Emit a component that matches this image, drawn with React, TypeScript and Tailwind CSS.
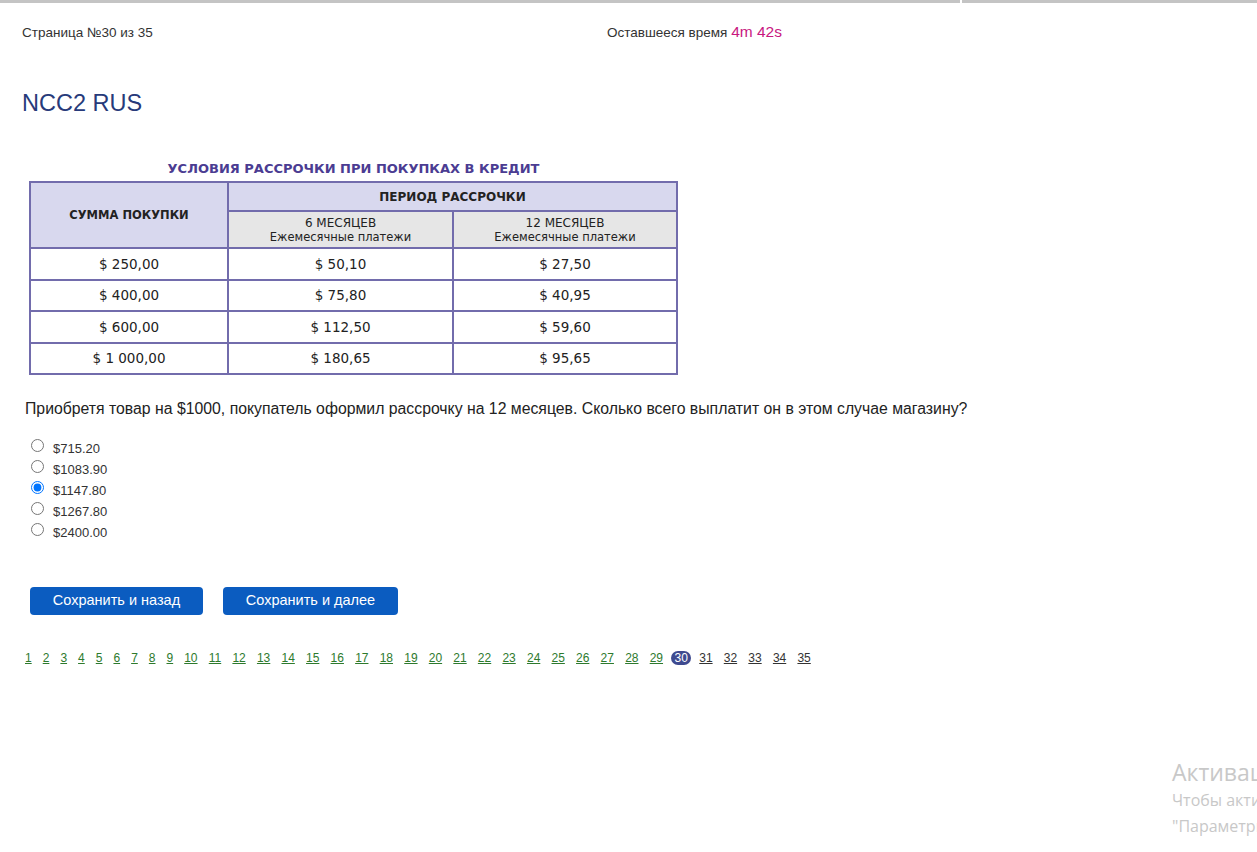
import React from 'react';

const rows = [
  ['$ 250,00', '$ 50,10', '$ 27,50'],
  ['$ 400,00', '$ 75,80', '$ 40,95'],
  ['$ 600,00', '$ 112,50', '$ 59,60'],
  ['$ 1 000,00', '$ 180,65', '$ 95,65'],
];

const options = ['$715.20', '$1083.90', '$1147.80', '$1267.80', '$2400.00'];

const pages = Array.from({ length: 35 }, (_, i) => i + 1);

export default function App() {
  const [selected, setSelected] = React.useState(2);

  return (
    <div className="relative h-[852px] w-full overflow-hidden bg-white font-['Liberation_Sans',Arial,sans-serif] text-[#222]">
      {/* top strip */}
      <div className="flex h-[3px]">
        <div className="h-full w-[960px] bg-[#c4c4c4]" />
        <div className="h-full w-[2px] bg-white" />
        <div className="h-full flex-1 bg-[#c4c4c4]" />
      </div>

      <div className="flex items-baseline pl-[22px] pt-[17px]">
        <div className="w-[585px] text-[13.5px] text-[#333]">Страница №30 из 35</div>
        <div className="text-[13.5px] text-[#333]">
          Оставшееся время <span className="text-[15.5px] text-[#c8177f]">4m 42s</span>
        </div>
      </div>

      <h1 className="pl-[22px] pt-[45px] text-[23.5px] leading-[30px] text-[#273a7a]">NCC2 RUS</h1>

      {/* table picture */}
      <div className="ml-[29px] mt-[43px] w-[649px] font-['DejaVu_Sans',Verdana,sans-serif]">
        <div className="text-center text-[13px] font-bold leading-[16px] text-[#4b3c92]">
          УСЛОВИЯ РАССРОЧКИ ПРИ ПОКУПКАХ В КРЕДИТ
        </div>
        <table className="mt-[4px] w-full border-collapse border-2 border-[#726cac] text-center text-[#222]">
          <thead>
            <tr className="h-[29px]">
              <th
                rowSpan={2}
                className="w-[198px] border-2 border-[#726cac] bg-[#d8d8ee] text-[11.5px] font-bold"
              >
                СУММА ПОКУПКИ
              </th>
              <th colSpan={2} className="border-2 border-[#726cac] bg-[#d8d8ee] text-[12px] font-bold">
                ПЕРИОД РАССРОЧКИ
              </th>
            </tr>
            <tr className="h-[37px]">
              <th className="w-[225px] border-2 border-[#726cac] bg-[#e6e6e6] text-[12px] font-normal leading-[14px]">
                6 МЕСЯЦЕВ
                <br />
                <span className="text-[11.5px]">Ежемесячные платежи</span>
              </th>
              <th className="border-2 border-[#726cac] bg-[#e6e6e6] text-[12px] font-normal leading-[14px]">
                12 МЕСЯЦЕВ
                <br />
                <span className="text-[11.5px]">Ежемесячные платежи</span>
              </th>
            </tr>
          </thead>
          <tbody>
            {rows.map((r) => (
              <tr key={r[0]} className="h-[31.5px] text-[13.5px]">
                {r.map((c, i) => (
                  <td key={i} className="border-2 border-[#726cac]">
                    {c}
                  </td>
                ))}
              </tr>
            ))}
          </tbody>
        </table>
      </div>

      <p className="pl-[25px] pt-[25px] text-[15.8px] leading-[18px] text-[#222]">
        Приобретя товар на $1000, покупатель оформил рассрочку на 12 месяцев. Сколько всего выплатит он в этом случае магазину?
      </p>

      <div className="flex flex-col pl-[26px] pt-[21px]">
        {options.map((o, i) => (
          <label key={o} className="flex h-[21px] items-start text-[13px] text-[#333]">
            <input
              type="radio"
              name="answer"
              checked={selected === i}
              onChange={() => setSelected(i)}
              className="mt-0 ml-[5px] h-[13px] w-[13px]"
            />
            <span className="ml-[9px] mt-[3px] leading-[14px]">{o}</span>
          </label>
        ))}
      </div>

      <div className="flex gap-[20px] pl-[30px] pt-[43px]">
        <button className="h-[28px] w-[173px] rounded-[4px] bg-[#0b5cc0] text-[14.5px] text-white">
          Сохранить и назад
        </button>
        <button className="h-[28px] w-[175px] rounded-[4px] bg-[#0b5cc0] text-[14.5px] text-white">
          Сохранить и далее
        </button>
      </div>

      <div className="flex items-center pl-[25px] pt-[36px] text-[12px] leading-[14px]">
        {pages.map((p) =>
          p === 30 ? (
            <span
              key={p}
              className="mr-[8px] -ml-[3px] flex h-[14px] w-[20px] items-center justify-center rounded-full bg-[#3e4a8f] text-white"
            >
              {p}
            </span>
          ) : (
            <a
              key={p}
              href="#"
              className={
                'underline ' +
                (p < 10 ? 'mr-[11px] ' : 'mr-[11.2px] ') +
                (p < 30 ? 'text-[#2d7a2d]' : 'text-[#333]')
              }
            >
              {p}
            </a>
          ),
        )}
      </div>

      {/* windows activation watermark */}
      <div className="absolute left-[1172px] top-[757px] whitespace-nowrap font-['Open_Sans',sans-serif] text-[#c8c8c8]">
        <div className="text-[23px] leading-[30px]">Активация Windows</div>
        <div className="text-[16px] leading-[27px]">Чтобы активировать Windows, перейдите в</div>
        <div className="text-[16px] leading-[24px]">"Параметры".</div>
      </div>
    </div>
  );
}
